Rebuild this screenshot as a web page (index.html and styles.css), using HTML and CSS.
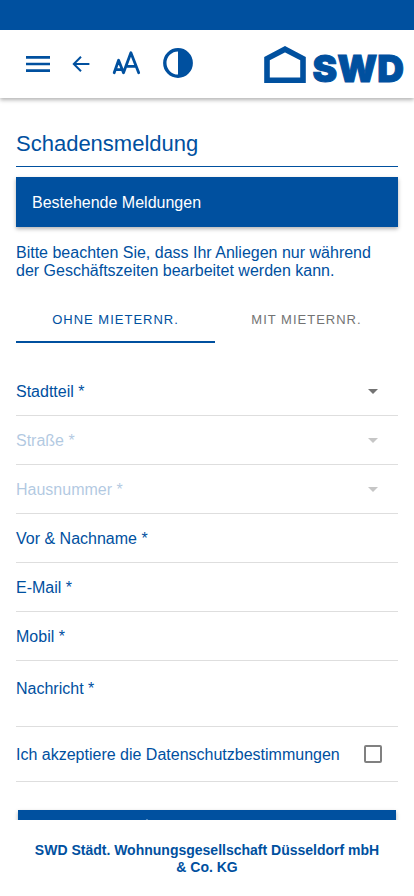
FILE: index.html
```html
<!DOCTYPE html>
<html lang="de">
<head>
  <meta charset="utf-8">
  <meta name="viewport" content="width=device-width, initial-scale=1">
  <title>Schadensmeldung</title>
  <link rel="stylesheet" href="styles.css">
</head>
<body>
  <header class="header">
    <nav class="tools">
      <button class="tool" type="button" aria-label="Menü">
        <svg width="24" height="16" viewBox="0 0 24 16"><path d="M0 0h24v2.7H0zM0 6.7h24v2.6H0zM0 13.3h24V16H0z" fill="currentColor"/></svg>
      </button>
      <button class="tool" type="button" aria-label="Zurück">
        <svg width="18" height="16" viewBox="0 0 18 16"><path d="M9 .8 1.8 8 9 15.2M1.8 8H17.4" fill="none" stroke="currentColor" stroke-width="2"/></svg>
      </button>
      <button class="tool" type="button" aria-label="Schriftgröße">
        <svg width="29" height="26" viewBox="0 0 29 26"><path d="M2.2 21.8 6.6 9.3 11.5 21.8 18.9 1.8 26.7 21.8M4.4 18.6h5.2M15.2 15.3h8.8" fill="none" stroke="currentColor" stroke-width="2.8" stroke-linecap="round" stroke-linejoin="round"/></svg>
      </button>
      <button class="tool" type="button" aria-label="Kontrast">
        <svg width="30" height="32" viewBox="0 0 30 32"><circle cx="15" cy="15" r="13.2" fill="none" stroke="currentColor" stroke-width="3.4"/><path d="M15 1a14 14 0 0 1 0 28z" fill="currentColor"/></svg>
      </button>
    </nav>
    <a class="logo" href="#">
      <svg width="42" height="38" viewBox="0 0 42 38"><path d="M3 34.2V12.6L21 3.2l18 9.4v21.6z" fill="none" stroke="currentColor" stroke-width="5.6"/></svg>
      <span class="logo-name">SWD</span>
    </a>
  </header>

  <main class="content">
    <h1 class="title">Schadensmeldung</h1>
    <button class="existing" type="button">Bestehende Meldungen</button>
    <p class="notice">Bitte beachten Sie, dass Ihr Anliegen nur während der Geschäftszeiten bearbeitet werden kann.</p>

    <div class="tabs" role="tablist">
      <button class="tab tab-active" type="button" role="tab" aria-selected="true">OHNE MIETERNR.</button>
      <button class="tab" type="button" role="tab" aria-selected="false">MIT MIETERNR.</button>
    </div>

    <form class="form">
      <div class="row">
        <label for="district">Stadtteil *</label>
        <select id="district" class="field"></select>
        <svg class="arrow" width="10" height="5" viewBox="0 0 10 5"><path d="M0 0h10L5 5z" fill="currentColor"/></svg>
      </div>
      <div class="row row-disabled">
        <label for="street">Straße *</label>
        <select id="street" class="field" disabled></select>
        <svg class="arrow" width="10" height="5" viewBox="0 0 10 5"><path d="M0 0h10L5 5z" fill="currentColor"/></svg>
      </div>
      <div class="row row-disabled">
        <label for="number">Hausnummer *</label>
        <select id="number" class="field" disabled></select>
        <svg class="arrow" width="10" height="5" viewBox="0 0 10 5"><path d="M0 0h10L5 5z" fill="currentColor"/></svg>
      </div>
      <div class="row">
        <label for="name">Vor &amp; Nachname *</label>
        <input id="name" class="field" type="text">
      </div>
      <div class="row">
        <label for="mail">E-Mail *</label>
        <input id="mail" class="field" type="email">
      </div>
      <div class="row">
        <label for="mobile">Mobil *</label>
        <input id="mobile" class="field" type="tel">
      </div>
      <div class="row row-message">
        <label for="message">Nachricht *</label>
        <textarea id="message" class="field" rows="2"></textarea>
      </div>
      <div class="row row-consent">
        <label for="consent">Ich akzeptiere die Datenschutzbestimmungen</label>
        <input id="consent" class="checkbox" type="checkbox">
      </div>
      <button class="photo" type="button" aria-label="Foto">
        <svg width="24" height="24" viewBox="0 0 24 24"><path d="M12 2v21M1 12h22" fill="none" stroke="currentColor" stroke-width="3" stroke-linecap="round"/></svg>
      </button>
    </form>
  </main>

  <footer class="footer">SWD Städt. Wohnungsgesellschaft Düsseldorf mbH &amp; Co. KG</footer>
</body>
</html>
```
FILE: styles.css
```css
:root {
  --blue: #00509f;
  --line: #dedede;
}

* {
  box-sizing: border-box;
}

body {
  display: flex;
  flex-direction: column;
  height: 100vh;
  margin: 0;
  background: #fff;
  color: var(--blue);
  font: 16px/18px "Liberation Sans", Arial, sans-serif;
}

button,
select,
input,
textarea {
  margin: 0;
  padding: 0;
  border: 0;
  background: none;
  color: inherit;
  font: inherit;
}

svg {
  display: block;
  flex: none;
}

.header {
  display: flex;
  justify-content: space-between;
  align-items: center;
  height: 98px;
  flex: none;
  padding: 0 10px 0 26px;
  border-top: 30px solid var(--blue);
  box-shadow: 0 2px 4px rgba(0, 0, 0, 0.3);
}

.tools {
  display: flex;
  align-items: center;
  gap: 22px;
}

.logo {
  display: flex;
  align-items: flex-start;
  gap: 7px;
  padding-top: 10px;
  color: inherit;
  text-decoration: none;
}

.logo-name {
  font: 900 37px/46px Inter, "Liberation Sans", sans-serif;
  -webkit-text-stroke: 1px currentColor;
}

.content {
  flex: 1;
  min-height: 0;
  padding: 33px 16px 16px;
  overflow-y: auto;
  scrollbar-width: none;
}

.title {
  margin: 0 0 10px;
  padding-bottom: 9px;
  border-bottom: 1px solid var(--blue);
  font-size: 22px;
  font-weight: 400;
  line-height: 26px;
}

.existing {
  display: block;
  width: 100%;
  height: 50px;
  padding: 2px 16px 0;
  background: var(--blue);
  box-shadow: 0 2px 4px rgba(0, 0, 0, 0.3);
  color: #fff;
  text-align: left;
}

.notice {
  margin: 17px 0 15px;
}

.tabs {
  display: flex;
  margin-bottom: 24px;
}

.tab {
  width: 199px;
  height: 48px;
  padding-top: 3px;
  border-bottom: 2px solid transparent;
  color: #737373;
  font-size: 13px;
  letter-spacing: 1px;
}

.tab:last-child {
  flex: 1;
}

.tab-active {
  border-color: var(--blue);
  color: var(--blue);
}

.row {
  display: flex;
  align-items: center;
  gap: 8px;
  min-height: 49px;
  border-bottom: 1px solid var(--line);
}

.row label {
  padding-top: 2px;
}

.field {
  flex: 1;
  min-width: 0;
  appearance: none;
  outline: 0;
  resize: none;
}

.arrow {
  margin-right: 20px;
  color: #737373;
}

.row-disabled > * {
  opacity: 0.3;
}

.row-disabled .arrow {
  opacity: 0.4;
}

.row-message {
  align-items: flex-start;
  padding: 17px 0 12px;
}

.row-consent {
  justify-content: space-between;
  min-height: 55px;
  padding-right: 16px;
}

.checkbox {
  width: 18px;
  height: 18px;
  border: 2px solid #808080;
  border-radius: 2px;
  appearance: none;
}

.photo {
  display: flex;
  align-items: center;
  width: calc(100% - 4px);
  height: 42px;
  margin: 28px 2px 0;
  padding-left: 117px;
  background: var(--blue);
  box-shadow: 0 2px 4px rgba(0, 0, 0, 0.3);
  color: #fff;
}

.footer {
  flex: none;
  min-height: 76px;
  padding: 22px 30px 20px;
  background: #fff;
  font-size: 14px;
  font-weight: 700;
  line-height: 17px;
  text-align: center;
}
```
